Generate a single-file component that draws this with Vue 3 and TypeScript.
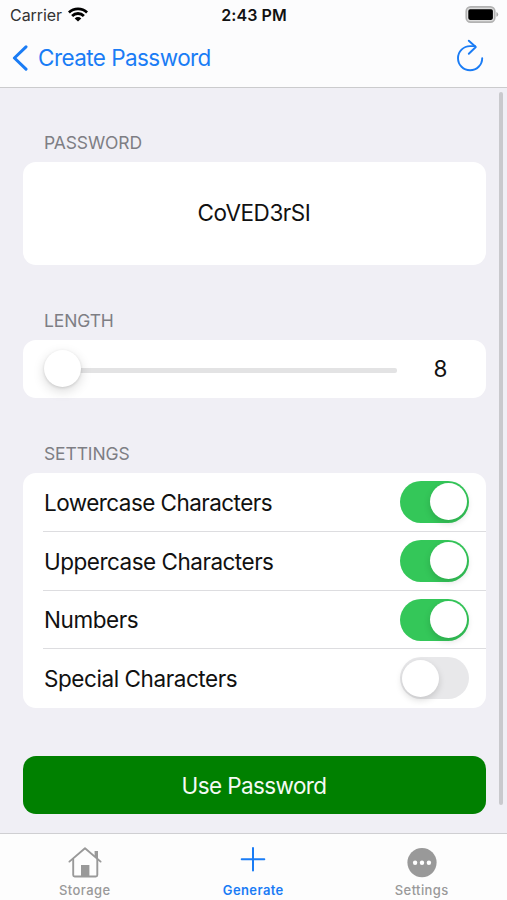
<script setup lang="ts">
import { ref } from 'vue'

interface Option {
  label: string
  on: boolean
  key: string
}

const password = ref('CoVED3rSI')
const length = ref(8)
const options = ref<Option[]>([
  { key: 'lower', label: 'Lowercase Characters', on: true },
  { key: 'upper', label: 'Uppercase Characters', on: true },
  { key: 'numbers', label: 'Numbers', on: true },
  { key: 'special', label: 'Special Characters', on: false },
])
</script>

<template>
  <div class="screen">
    <header class="top">
      <div class="status">
        <div class="carrier">
          <span class="carrier-name">Carrier</span>
          <svg class="wifi" width="20" height="15" viewBox="0 0 20 15">
            <g fill="none" stroke="#000" stroke-width="2.8">
              <path d="M0.9 5.5 A13 13 0 0 1 19.1 5.5" />
              <path d="M4.1 8.9 A8.4 8.4 0 0 1 15.9 8.9" />
            </g>
            <path d="M6.7 11.4 A4.7 4.7 0 0 1 13.3 11.4 L10 14.6 Z" fill="#000" />
          </svg>
        </div>
        <span class="time">2:43 PM</span>
        <svg class="battery" width="34" height="17" viewBox="0 0 34 17">
          <rect x="1.2" y="0.9" width="28.6" height="15.2" rx="4.4" fill="#ddd" stroke="#b2b2b2" stroke-width="1.6" />
          <rect x="3.3" y="3.3" width="24.6" height="10.6" rx="1.8" fill="#000" />
          <path d="M31.4 6 Q33.2 6.6 33.2 8.4 Q33.2 10.2 31.4 10.8 Z" fill="#aaa" />
        </svg>
      </div>
      <nav class="nav">
        <button class="back">
          <svg width="16" height="26" viewBox="0 0 16 26">
            <path d="M14 1.8 L2.4 13 L14 24.2" fill="none" stroke="#1a7cf5" stroke-width="3" stroke-linecap="round" stroke-linejoin="round" />
          </svg>
          <span class="title">Create Password</span>
        </button>
        <button class="refresh" aria-label="Regenerate">
          <svg width="28" height="34" viewBox="0 0 28 34" fill="none" stroke="#1a7cf5" stroke-width="1.9" stroke-linecap="round" stroke-linejoin="round">
            <path d="M26.2 19.2 A12.1 12.1 0 1 1 14.1 7.1 H19" />
            <path d="M12.8 1.7 L19.8 8 L12.8 14.8" />
          </svg>
        </button>
      </nav>
    </header>

    <main class="content">
      <h2 class="heading">PASSWORD</h2>
      <section class="card password"><span class="pw">{{ password }}</span></section>

      <h2 class="heading">LENGTH</h2>
      <section class="card length">
        <div class="slider"><span class="knob"></span><span class="track"></span></div>
        <span class="value">{{ length }}</span>
      </section>

      <h2 class="heading settings-heading">SETTINGS</h2>
      <section class="card options">
        <div v-for="(o, i) in options" :key="o.key" class="option">
          <span :class="['label', o.key]">{{ o.label }}</span>
          <button :class="['switch', { on: o.on }]" role="switch" :aria-checked="o.on" @click="options[i].on = !o.on">
            <span class="thumb"></span>
          </button>
        </div>
      </section>

      <button class="use"><span>Use Password</span></button>
      <span class="scrollbar"></span>
    </main>

    <footer class="tabs">
      <div class="tab">
        <svg width="34" height="34" viewBox="0 0 34 34">
          <g fill="none" stroke="#999" stroke-width="1.9" stroke-linejoin="round" stroke-linecap="round">
            <path d="M1.4 15.6 L17 2.3 L32.6 15.6" />
            <path d="M5.2 13 V29 Q5.2 30.5 6.7 30.5 H27.8 Q29.3 30.5 29.3 29 V13" />
          </g>
          <path d="M26.6 5 H30 V13.5 L26.6 10.6 Z M13 19 H21.4 V30.5 H13 Z" fill="#999" />
        </svg>
        <span>Storage</span>
      </div>
      <div class="tab active">
        <svg width="34" height="34" viewBox="0 0 34 34">
          <path d="M17 2 V24.6 M5.7 13.3 H28.3" fill="none" stroke="#1a7cf5" stroke-width="2" stroke-linecap="round" />
        </svg>
        <span>Generate</span>
      </div>
      <div class="tab">
        <svg width="34" height="34" viewBox="0 0 34 34">
          <circle cx="17" cy="16.6" r="14.6" fill="#999" />
          <g fill="#fff"><circle cx="10.1" cy="16.7" r="2.2" /><circle cx="17" cy="16.7" r="2.2" /><circle cx="23.9" cy="16.7" r="2.2" /></g>
        </svg>
        <span>Settings</span>
      </div>
    </footer>
  </div>
</template>

<style>
body {
  margin: 0;
}
</style>

<style scoped>
.screen {
  box-sizing: border-box;
  width: 507px;
  height: 900px;
  display: flex;
  flex-direction: column;
  overflow: hidden;
  background: #f0eff5;
  font-family: Inter, "Liberation Sans", sans-serif;
  color: #111;
}
button {
  padding: 0;
  border: 0;
  background: none;
  font: inherit;
  color: inherit;
}
span {
  white-space: nowrap;
}
svg {
  display: block;
  flex: none;
}
.top {
  box-sizing: border-box;
  height: 88px;
  background: #fcfcfd;
  border-bottom: 1px solid #cbcbcd;
}
.status {
  display: grid;
  grid-template-columns: 1fr auto 1fr;
  align-items: center;
  height: 29px;
  padding: 0 8px 0 10px;
}
.carrier {
  display: flex;
  align-items: center;
  gap: 6px;
}
.carrier-name {
  font-size: 16px;
  letter-spacing: -0.05px;
  color: #333;
}
.time {
  font-size: 16px;
  font-weight: 600;
  letter-spacing: 0.1px;
  margin-right: 1px;
}
.battery {
  justify-self: end;
  margin-top: -1px;
}
.nav {
  display: flex;
  justify-content: space-between;
  height: 58px;
  padding: 0 23px 0 12px;
}
.back {
  display: flex;
  align-items: center;
  gap: 10px;
  color: #1a7cf5;
  font-size: 22.5px;
  letter-spacing: -0.56px;
}
.title {
  padding-bottom: 2px;
}
.refresh {
  padding-top: 10px;
  align-self: flex-start;
}
.content {
  position: relative;
  flex: 1;
  padding: 43px 21.5px 0 22.5px;
}
.heading {
  margin: 0;
  padding-left: 21.5px;
  height: 31px;
  line-height: 23px;
  font-size: 17.5px;
  font-weight: 400;
  letter-spacing: -0.12px;
  color: #7e7e84;
}
.card {
  box-sizing: border-box;
  background: #fff;
  border-radius: 13px;
}
.password {
  height: 102.5px;
  margin-bottom: 44.5px;
  padding-bottom: 2px;
  display: flex;
  align-items: center;
  justify-content: center;
  font-size: 22.5px;
  letter-spacing: -0.45px;
}
.length {
  height: 57.5px;
  margin-bottom: 44px;
  display: flex;
  align-items: center;
  padding: 0 38px 0 21px;
  justify-content: space-between;
}
.slider {
  display: flex;
  align-items: center;
  width: 353px;
}
.knob {
  width: 37px;
  height: 37px;
  border-radius: 50%;
  background: #fff;
  box-shadow: 0 4px 12px rgba(0, 0, 0, 0.15), 0 1px 3px rgba(0, 0, 0, 0.12);
  z-index: 1;
}
.track {
  flex: 1;
  height: 5px;
  margin-top: 3px;
  margin-left: -3px;
  background: #e3e3e4;
  border-radius: 0 2px 2px 0;
}
.value {
  font-size: 22.5px;
}
.options {
  height: 235px;
  margin-bottom: 48.5px;
}
.option {
  display: flex;
  align-items: center;
  justify-content: space-between;
  box-sizing: border-box;
  height: 58.67px;
  margin-left: 20px;
  padding: 0 16.5px 0 1.5px;
  font-size: 22.5px;
  letter-spacing: -0.55px;
}
.label {
  padding-top: 1px;
}
.label.upper {
  letter-spacing: -0.5px;
}
.label.numbers,
.label.special {
  padding-top: 0;
  letter-spacing: -0.43px;
}
.option + .option {
  border-top: 1.5px solid #dddde0;
}
.switch {
  box-sizing: border-box;
  width: 69px;
  height: 42px;
  padding: 2px;
  border-radius: 21px;
  background: #e8e8ea;
  display: flex;
  align-items: center;
}
.switch.on {
  background: #34c759;
  justify-content: flex-end;
}
.thumb {
  width: 37px;
  height: 37px;
  border-radius: 50%;
  background: #fff;
  box-shadow: 0 3px 7px rgba(0, 0, 0, 0.15);
}
.use {
  display: block;
  width: 100%;
  height: 57.5px;
  padding-top: 2px;
  border-radius: 13px;
  background: #008000;
  color: #f4faf4;
  font-size: 22.5px;
  letter-spacing: -0.6px;
  text-align: center;
}
.scrollbar {
  position: absolute;
  top: 4px;
  right: 4px;
  width: 4px;
  height: 713px;
  border-radius: 2px;
  background: #c9c9cd;
}
.tabs {
  box-sizing: border-box;
  height: 67px;
  border-top: 1px solid #cfcfd2;
  background: #fdfdfd;
  display: grid;
  grid-template-columns: repeat(3, 168.5px);
  padding-left: 0.5px;
}
.tab {
  display: flex;
  flex-direction: column;
  align-items: center;
  padding-top: 12px;
  font-size: 13px;
  font-weight: 500;
  line-height: 20px;
  letter-spacing: 0.4px;
  color: #999;
}
.tab.active {
  color: #1a7cf5;
  font-weight: 600;
}
</style>
